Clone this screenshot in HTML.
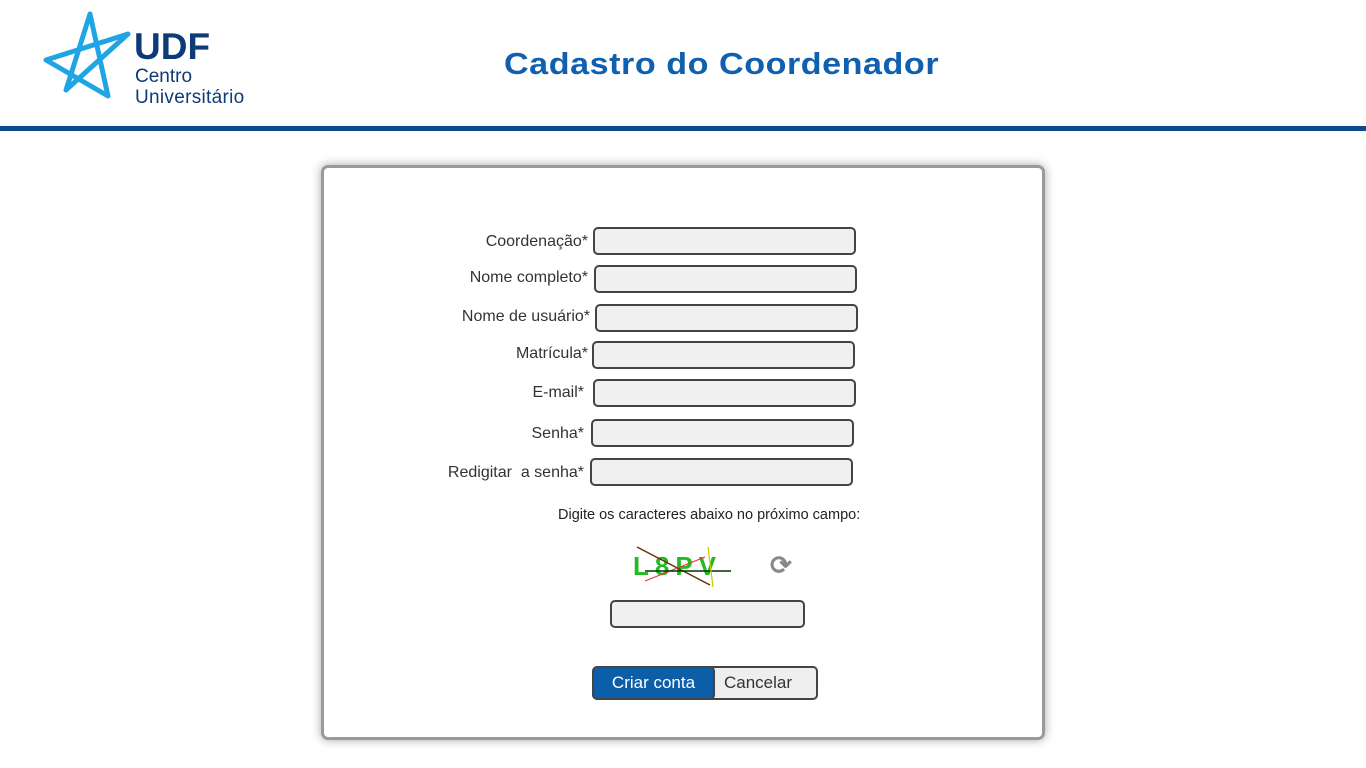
<!DOCTYPE html>
<html><head><meta charset="utf-8"><style>
*{margin:0;padding:0;box-sizing:border-box}
body{width:1366px;height:768px;background:#fff;font-family:"Liberation Sans",Arial,sans-serif;position:relative;overflow:hidden}
.hdr{position:absolute;left:0;top:126px;width:1366px;height:5px;background:#0d4a8a}
.title{position:absolute;left:504px;top:46px;font-size:31px;font-weight:bold;color:#1060b0;letter-spacing:0.5px;transform:scaleX(1.1);transform-origin:left top;white-space:nowrap}
.card{position:absolute;left:321px;top:165px;width:724px;height:575px;border:3px solid #9a9a9a;border-radius:7px;box-shadow:0 0 10px rgba(0,0,0,.35)}
.lbl{position:absolute;font-size:16px;color:#333;text-align:right;width:300px;line-height:18px}
.in{position:absolute;height:28px;width:263px;border:2px solid #444;border-radius:5px;background:#f0f0f0}
.sm{position:absolute;font-size:14.5px;color:#222}
.btn{position:absolute;top:666px;height:34px;border:2px solid #444;font-size:17px;line-height:30px}
</style></head><body>
<svg style="position:absolute;left:40px;top:10px" width="95" height="90" viewBox="0 0 95 90">
<g fill="none" stroke="#1fa5e5" stroke-width="5" stroke-linejoin="round" stroke-linecap="round">
<path d="M50 4 L26 80 L88 24 L6 50 L68 86 Z"/>
</g></svg>
<div style="position:absolute;left:134px;top:28px;font-size:37px;font-weight:bold;color:#0d3b78;line-height:38px">UDF</div>
<div style="position:absolute;left:135px;top:67px;font-size:19px;color:#0d3b78;line-height:20px">Centro</div>
<div style="position:absolute;left:135px;top:88px;font-size:19px;color:#0d3b78;line-height:20px;letter-spacing:0.3px">Universitário</div>
<div class="title">Cadastro do Coordenador</div>
<div class="hdr"></div>
<div class="card"></div>
<div class="lbl" style="left:288px;top:233px">Coordenação*</div><div class="in" style="left:593px;top:227px"></div>
<div class="lbl" style="left:288px;top:269px">Nome completo*</div><div class="in" style="left:594px;top:265px"></div>
<div class="lbl" style="left:290px;top:308px">Nome de usuário*</div><div class="in" style="left:595px;top:304px"></div>
<div class="lbl" style="left:288px;top:345px">Matrícula*</div><div class="in" style="left:592px;top:341px"></div>
<div class="lbl" style="left:284px;top:384px">E-mail*</div><div class="in" style="left:593px;top:379px"></div>
<div class="lbl" style="left:284px;top:425px">Senha*</div><div class="in" style="left:591px;top:419px"></div>
<div class="lbl" style="left:284px;top:464px">Redigitar &nbsp;a senha*</div><div class="in" style="left:590px;top:458px"></div>
<div class="sm" style="left:558px;top:507px">Digite os caracteres abaixo no próximo campo:</div>
<svg style="position:absolute;left:625px;top:543px" width="110" height="48">
<text x="8" y="32" font-family="Liberation Sans" font-size="26" font-weight="bold" fill="#22bb22" letter-spacing="6">L8PV</text>
<path d="M12 4 L85 42" stroke="#663300" stroke-width="1.5"/>
<path d="M20 38 L80 14" stroke="#e33" stroke-width="1.2"/>
<path d="M20 28 L106 28" stroke="#030" stroke-width="1.5"/>
<path d="M83 4 L88 44" stroke="#cc0" stroke-width="1.2"/>
</svg>
<div style="position:absolute;left:770px;top:550px;font-size:26px;color:#888;font-weight:bold">⟳</div>
<div class="in" style="left:610px;top:600px;width:195px"></div>
<div class="btn" style="left:710px;width:108px;background:#eee;color:#333;border-radius:0 5px 5px 0;padding-left:12px">Cancelar</div>
<div class="btn" style="left:592px;width:123px;background:#0d5ea8;color:#fff;border-radius:5px;text-align:center">Criar conta</div>
</body></html>
